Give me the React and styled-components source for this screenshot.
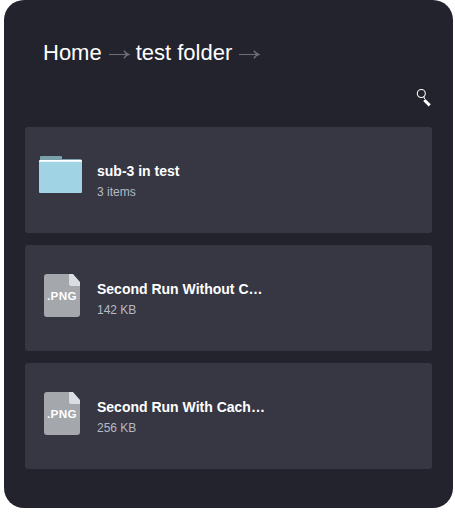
import React from 'react';
import styled, { createGlobalStyle } from 'styled-components';

const GlobalStyle = createGlobalStyle`
  * { box-sizing: border-box; }
  body { margin: 0; background: #fff; font-family: "Liberation Sans", Arial, sans-serif; }
`;

const Panel = styled.main`
  width: 449px;
  height: 508px;
  margin-left: 4px;
  padding: 38px 21px 0;
  border-radius: 20px;
  background: #23232e;
`;

const Breadcrumbs = styled.nav`
  display: flex;
  height: 30px;
  padding-left: 18px;
  line-height: 30px;
  font-size: 22px;
  color: #fff;
  white-space: pre;
`;

const ArrowSvg = styled.svg`
  display: block;
  flex: none;
  margin: 0 6px;
`;

const SearchRow = styled.div`
  display: flex;
  justify-content: flex-end;
  height: 59px;
  padding: 20px 0 0;
`;

const FileList = styled.ul`
  display: grid;
  gap: 12px;
  margin: 0;
  padding: 0;
  list-style: none;
`;

const Card = styled.li`
  display: flex;
  width: 407px;
  height: 106px;
  border-radius: 3px;
  background: #373743;
`;

const IconSlot = styled.div`
  width: 72px;
  height: 106px;
`;

const Details = styled.div`
  padding-top: 35px;
`;

const Name = styled.div`
  width: 175px;
  height: 19px;
  line-height: 19px;
  font-size: 14px;
  font-weight: 700;
  color: #fff;
  white-space: nowrap;
`;

const Size = styled.div`
  height: 20px;
  margin-top: 1px;
  line-height: 20px;
  font-size: 12px;
  color: #b4bbc4;
`;

const IconSvg = styled.svg`
  display: block;
`;

const PngLabel = styled.text`
  font: 700 11.7px "Liberation Sans", Arial, sans-serif;
  fill: #fff;
`;

const Arrow = () => (
  <ArrowSvg width="22" height="30" fill="none" stroke="#6c6c74">
    <path d="M1 16.5h19.5" strokeWidth="1.1" />
    <path d="M16 12.6q1.4 2.9 4.6 3.9-3.2 1-4.6 3.9" strokeWidth="1.4" />
  </ArrowSvg>
);

const FolderIcon = () => (
  <IconSvg width="72" height="106">
    <path d="M15 34v-4q0-1 1-1h20q1 0 1 1v2h18q2 0 2 2z" fill="#7ba1ad" />
    <rect x="14" y="33" width="43" height="5" rx="1" fill="#fff" />
    <path d="M14 34.7h43V65q0 1-1 1H15q-1 0-1-1z" fill="#a0d4e4" />
  </IconSvg>
);

const PngIcon = () => (
  <IconSvg width="72" height="106">
    <path d="M22 29h22l11 12v28q0 3-3 3H22q-3 0-3-3V32q0-3 3-3z" fill="#a4a7ac" />
    <path d="M44 29h4l7 8v4h-9q-2 0-2-2z" fill="#dadde1" />
    <PngLabel x="22" y="55" textLength="29.5">.PNG</PngLabel>
  </IconSvg>
);

const SearchIcon = () => (
  <IconSvg width="18" height="22">
    <circle cx="7.3" cy="5.5" r="4" fill="none" stroke="#fff" strokeWidth="1.1" />
    <path d="M10.3 12l5.4 5.4" stroke="#fff" strokeWidth="3" />
    <path d="M9.8 8.4l.8 2.6" stroke="#fff" strokeWidth="1" />
  </IconSvg>
);

const files = [
  { name: 'sub-3 in test', size: '3 items', Icon: FolderIcon },
  { name: 'Second Run Without C…', size: '142 KB', Icon: PngIcon },
  { name: 'Second Run With Cach…', size: '256 KB', Icon: PngIcon },
];

export default function App() {
  return (
    <>
      <GlobalStyle />
      <Panel>
        <Breadcrumbs>
          <span>Home</span>
          <Arrow />
          <span>test folder</span>
          <Arrow />
        </Breadcrumbs>
        <SearchRow><SearchIcon /></SearchRow>
        <FileList>
          {files.map(({ name, size, Icon }) => (
            <Card key={name}>
              <IconSlot><Icon /></IconSlot>
              <Details>
                <Name>{name}</Name>
                <Size>{size}</Size>
              </Details>
            </Card>
          ))}
        </FileList>
      </Panel>
    </>
  );
}
